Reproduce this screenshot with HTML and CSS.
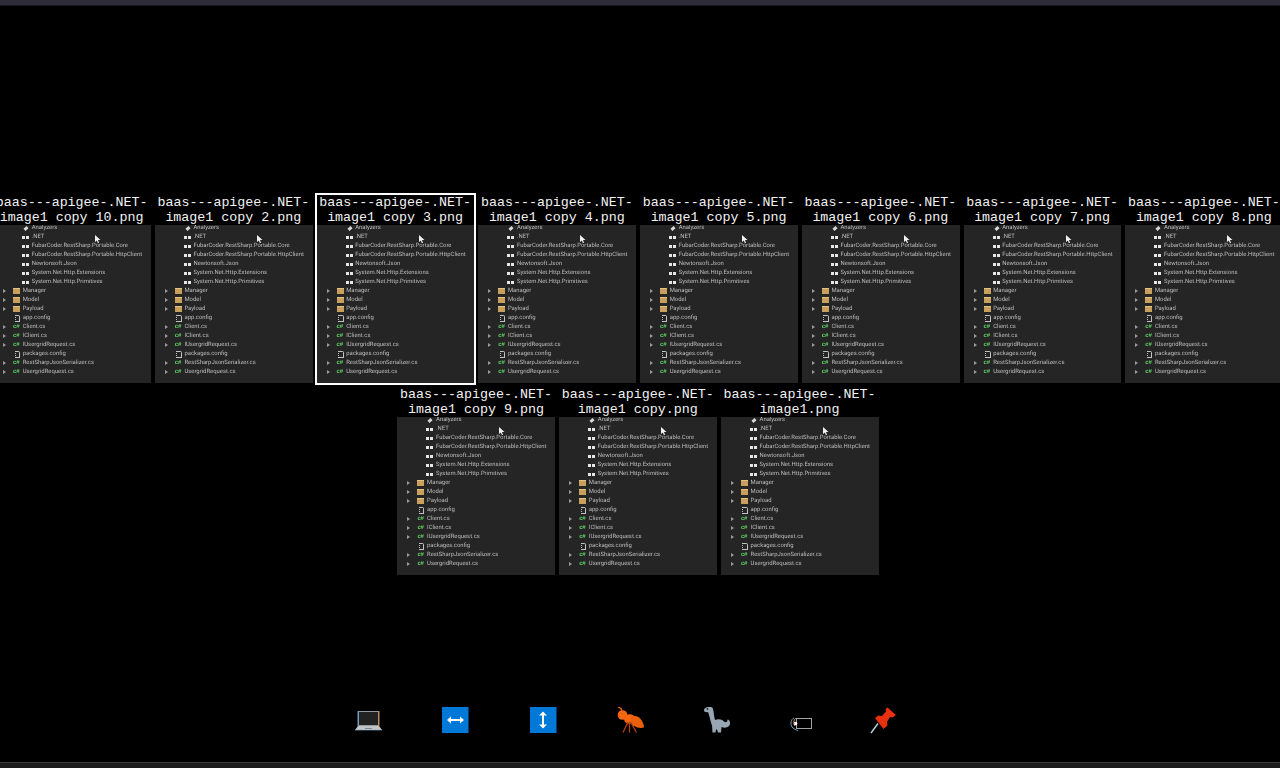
FILE: index.html
```html
<!DOCTYPE html>
<html lang="en">
<head>
<meta charset="utf-8">
<title>Gallery</title>
<link rel="stylesheet" href="styles.css">
</head>
<body>
<div class="topbar"></div>
<main class="gallery" id="gallery"></main>
<nav class="tools">
  <svg class="tool" viewBox="0 0 27 27"><rect x="3.500" y="4.500" width="20" height="14" fill="#222" stroke="#8f9aa0"/><path d="M24 4v15" stroke="#c98a3c"/><path d="M3 4v15" stroke="#5f9fc8"/><path d="M3 19h21l3 4H0z" fill="#c4c4c4"/><path d="M0 23h27" stroke="#7fb2d6" stroke-width=".6"/><path d="M10 21.500h7" stroke="#888"/></svg>
  <svg class="tool" viewBox="0 0 27 27"><rect width="26.400" height="26" fill="#0078d7"/><path d="M27 0v26" stroke="#05488a"/><path d="M5 13l4-3.500V12h9V9.500l4 3.500-4 3.500V14H9v2.500z" fill="#fff"/></svg>
  <svg class="tool" viewBox="0 0 27 27"><rect width="26.400" height="26" fill="#0078d7"/><path d="M27 0v26" stroke="#05488a"/><path d="M13 4.500l4 4h-3v9h3l-4 4-4-4h3v-9H9z" fill="#fff"/></svg>
  <svg class="tool" viewBox="0 0 27 27"><path d="M5 5L4 1.500 1 0" fill="none" stroke="#f4670f" stroke-width="1.300"/><circle cx="5.500" cy="8" r="4.800" fill="#f4670f"/><ellipse cx="12.500" cy="12" rx="5.500" ry="4.800" fill="#f4670f"/><path d="M15 9c6-1 11.500 4 12 11.500-6 1.500-12-1.500-14-6z" fill="#ea600c"/><path d="M11 15l-5 10.500M12.500 15v10.500M13.500 15l6 10.500" stroke="#b8410c" stroke-width="1.300" fill="none"/></svg>
  <svg class="tool" viewBox="0 0 27 27"><path d="M0 3c0-3 8-5 9-1 1 4 1 8 2 11 3-1.500 7-1 9 1.500 2 1.500 3.500.5 3.500-2 2.500 0 3.500 4.500 1.500 6.500-2 2-5 2-7.500 1l-.5 5.500H14l-1-3h-1l-.5 3h-3L8 18.500C6 12 5 7 4 5 2 5.500 0 5 0 3z" fill="#98a7b3"/><circle cx="3.500" cy="2" r=".9" fill="#233"/></svg>
  <svg class="tool tool-tag" viewBox="0 0 23 27"><rect x="7.500" y="11.500" width="15" height="10" fill="none" stroke="#a3a3a3"/><path d="M5 11c-3 1-4 6-2 9 1 1.500 4 2.500 6 4" fill="none" stroke="#6fa6c4"/><path d="M7 11c-2 1-3 5-1 8" fill="none" stroke="#c9a27a"/><circle cx="6.500" cy="16.500" r="1.800" fill="#fff"/><circle cx="4.800" cy="16.500" r=".8" fill="#e2332a"/></svg>
  <svg class="tool" viewBox="0 0 27 27"><path d="M9 16.500L2 26" stroke="#b9d3e6" stroke-width="1.400"/><path d="M18.500.5L27 8l-3.500 2.500-2.500-.5-3 5 .5 3.500-4 3.500L6 11l3.500-2.500 3.500.5 4-4.500-.5-2.500z" fill="#e8300f"/></svg>
</nav>
<div class="bottombar"></div>
<script src="script.js"></script>
</body>
</html>
```

FILE: styles.css
```css
html, body {
  margin: 0;
  height: 768px;
  overflow: hidden;
  background: #000;
}
body {
  display: flex;
  flex-direction: column;
}
.topbar {
  height: 5px;
  flex: none;
  background: #2e2d38;
  border-bottom: 1px solid #16161a;
}
.gallery {
  width: 1276px;
  margin-top: 187px;
  flex: none;
}
.gallery-row {
  display: flex;
  justify-content: center;
  flex-wrap: nowrap;
  height: 192px;
}
.tile {
  position: relative;
  flex: 0 0 161.75px;
  width: 161.75px;
  height: 192px;
  box-sizing: border-box;
  padding: 2px;
}
.tile-selected::after {
  content: "";
  position: absolute;
  inset: 0;
  border: 2px solid #fff;
}
.tile-label {
  height: 30px;
  margin-right: .5px;
  font: 13.33px/15px "Liberation Mono", monospace;
  color: #f2f2f2;
  text-align: center;
}
.shot {
  height: 157.5px;
  background: #252526;
  overflow: hidden;
  box-sizing: border-box;
  filter: blur(.35px);
}
.tree {
  margin-top: -1.5px;
}
.node {
  display: flex;
  align-items: center;
  height: 9px;
  padding-left: 10px;
  font: 5.9px/9px Roboto, sans-serif;
  text-rendering: geometricPrecision;
  color: #bdbdbd;
  white-space: nowrap;
}
.twist {
  flex: none;
  width: 3px;
  height: 5px;
  margin-right: 7px;
  box-sizing: border-box;
}
.twist-on {
  width: 0;
  height: 0;
  border-left: 3px solid #9a9a9a;
  border-top: 2.5px solid transparent;
  border-bottom: 2.5px solid transparent;
}
.indent {
  flex: none;
  width: 9px;
}
.glyph {
  flex: none;
  width: 7px;
  height: 7px;
  margin-right: 2.7px;
  box-sizing: border-box;
}
.folder {
  height: 6px;
  background: #c99f5e;
  border-top: 1px solid #e6c184;
}
.dep {
  display: flex;
  align-items: center;
  gap: 1px;
}
.dep i {
  display: block;
  flex: none;
  width: 3px;
  height: 3px;
  background: #e6e6e6;
}
.csharp {
  font: bold 6px/7px "Liberation Sans", sans-serif;
  color: #5fd164;
  letter-spacing: -.2px;
}
.config {
  border: 1px solid #c2c2c2;
  border-radius: 0 2px 0 0;
  border-left-style: dotted;
  height: 7px;
  width: 5.5px;
  margin-left: 1.5px;
  margin-right: 2.7px;
}
.analyzer {
  width: 4px;
  height: 3px;
  margin-left: 2px;
  margin-right: 3.7px;
  background: #d8d8d8;
  transform: rotate(-40deg);
}
.cursor {
  position: absolute;
  left: 102px;
  top: 10px;
  width: 6px;
  height: 8px;
}
.shot-wrap {
  position: relative;
}
.tools {
  display: flex;
  align-items: flex-start;
  gap: 60.33px;
  margin-top: 130px;
  padding-left: 355px;
  flex: none;
}
.tool {
  display: block;
  flex: none;
  width: 27px;
  height: 27px;
}
.tool-tag {
  width: 23px;
  margin: 0 -3px;
}
.bottombar {
  margin-top: auto;
  height: 5px;
  flex: none;
  background: #1c1c1c;
  border-top: 1px solid #3a3a3a;
}
```

FILE: script.js
```js
var names = [
  "image1 copy 10.png", "image1 copy 2.png", "image1 copy 3.png", "image1 copy 4.png",
  "image1 copy 5.png", "image1 copy 6.png", "image1 copy 7.png", "image1 copy 8.png",
  "image1 copy 9.png", "image1 copy.png", "image1.png"
];
var rows = [
  ["deep", "analyzer", "Analyzers"],
  ["deep", "dep", ".NET"],
  ["deep", "dep", "FubarCoder.RestSharp.Portable.Core"],
  ["deep", "dep", "FubarCoder.RestSharp.Portable.HttpClient"],
  ["deep", "dep", "Newtonsoft.Json"],
  ["deep", "dep", "System.Net.Http.Extensions"],
  ["deep", "dep", "System.Net.Http.Primitives"],
  ["open", "folder", "Manager"],
  ["open", "folder", "Model"],
  ["open", "folder", "Payload"],
  ["leaf", "config", "app.config"],
  ["open", "csharp", "Client.cs"],
  ["open", "csharp", "IClient.cs"],
  ["open", "csharp", "IUsergridRequest.cs"],
  ["leaf", "config", "packages.config"],
  ["open", "csharp", "RestSharpJsonSerializer.cs"],
  ["open", "csharp", "UsergridRequest.cs"]
];
var glyphs = {
  dep: '<span class="glyph dep"><i></i><i></i></span>',
  folder: '<span class="glyph folder"></span>',
  config: '<span class="glyph config"></span>',
  csharp: '<span class="glyph csharp">c#</span>',
  analyzer: '<span class="glyph analyzer"></span>'
};
var treeHtml = rows.map(function (r) {
  var twist = r[0] === "open" ? '<span class="twist twist-on"></span>' : '<span class="twist"></span>';
  var indent = r[0] === "deep" ? '<span class="indent"></span>' : '';
  return '<div class="node">' + twist + indent + glyphs[r[1]] + '<span>' + r[2] + '</span></div>';
}).join("");
var cursor = '<svg class="cursor" viewBox="0 0 6 8"><path d="M0 0l5.500 5H3l1 3-1 .3L1.800 5.500 0 7z" fill="#f2f2f2"/></svg>';
function tile(name, i) {
  return '<div class="tile' + (i === 2 ? ' tile-selected' : '') + '">' +
    '<div class="tile-label">baas---apigee-.NET-' + name + '</div>' +
    '<div class="shot-wrap"><div class="shot"><div class="tree">' + treeHtml + '</div></div>' + cursor + '</div></div>';
}
var html = '<div class="gallery-row">' + names.slice(0, 8).map(tile).join("") + '</div>' +
  '<div class="gallery-row">' + names.slice(8).map(function (n, i) { return tile(n, i + 8); }).join("") + '</div>';
document.getElementById("gallery").innerHTML = html;
```
